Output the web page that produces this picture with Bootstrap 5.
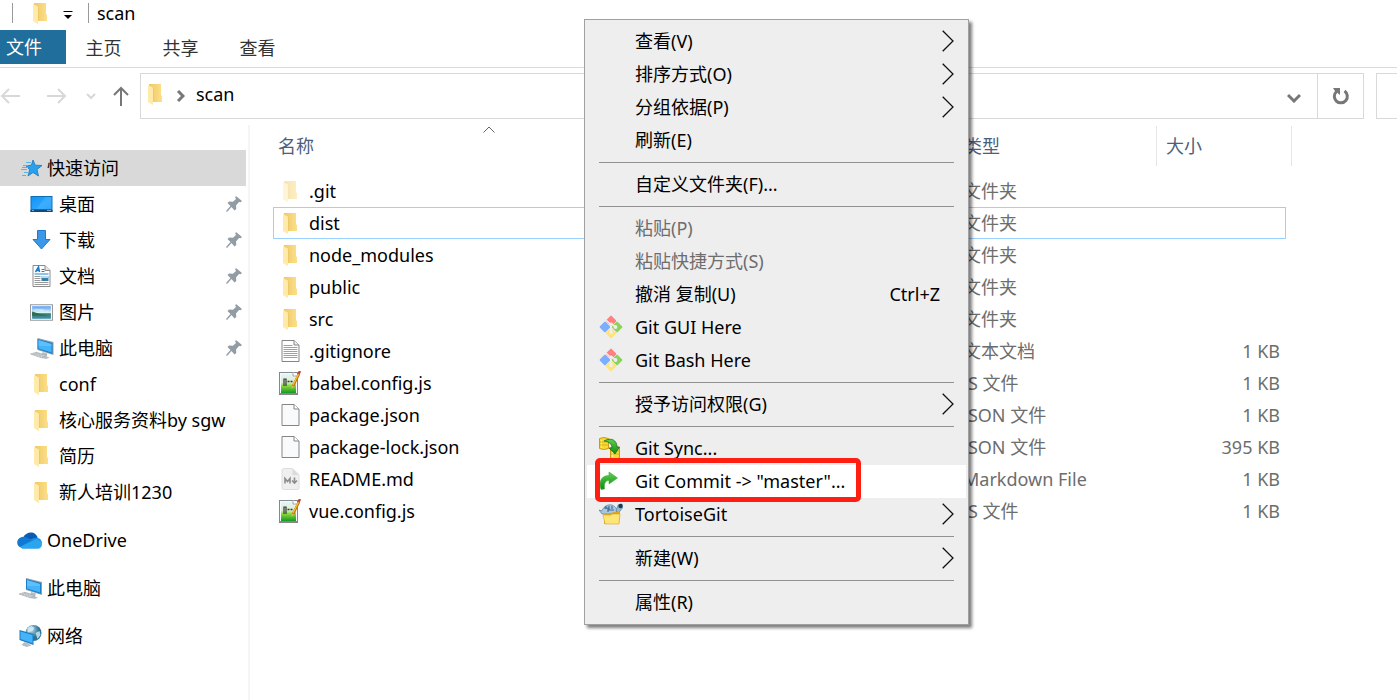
<!DOCTYPE html>
<html lang="zh-CN">
<head>
<meta charset="utf-8">
<meta name="viewport" content="width=device-width, initial-scale=1">
<title>scan</title>
<link rel="stylesheet" href="https://cdn.jsdelivr.net/npm/bootstrap@5.3.0/dist/css/bootstrap.min.css">
<style>
body{font-family:"Noto Sans","Noto Sans CJK SC",sans-serif;font-size:18px;line-height:24px;color:#000;background:#fff}
svg{display:block;flex:none}
button{color:inherit}
.plain{background:none;border:0;padding:0;color:inherit}
.explorer{min-height:100vh;overflow:hidden}
.titlebar{height:30px;padding:0 0 4px 12px}
.titlebar .plain{margin:4px 15px 0}
.titlebar .app{margin-left:20px}
.tick{width:1px;height:20px;background:#9a9a9a}
.ribbon{height:38px;border-bottom:1px solid #dadbdc;color:#333}
.ribbon .tab{height:36px;width:77px;line-height:36px;text-align:center}
.ribbon .tab-file{width:66px;height:34px;line-height:34px;background:#1f6e9c;color:#fff;text-align:left;padding-left:6px;margin-right:-1px}
.navrow{height:57px;padding:5px 0 6px}
.navrow .fwd{margin:0 19px 0 27px}
.navrow .up{margin:0 11px 0 17px}
.address{border:1px solid #d9d9d9;height:46px;padding-left:7px}
.address .crumb{margin:0 11px 0 14px}
.refresh{width:46px;height:44px;border-left:1px solid #d9d9d9}
.search{width:21px;height:46px;border:1px solid #d9d9d9;border-right:0;border-radius:0;padding:0;margin-left:12px}
.side{width:250px;flex:none;padding-top:25px;padding-right:2px;border-right:2px solid #f5f5f5}
.side a{color:#000;text-decoration:none;height:36px;width:246px;padding:0 4px 0 17px;display:flex;align-items:center}
.side a.sub{padding-left:30px}
.side a.current{background:#d9d9d9}
.side .root{margin-top:12px}
.side .ico{width:30px;flex:none}
.side .sub .ico{width:29px}
.main-pane{padding-left:23px}
.files{width:1019px;table-layout:fixed;border-collapse:separate;border-spacing:0}
.files th{height:50px;padding:0 0 8px;font-weight:400;color:#4c607a;vertical-align:middle;position:relative}
.files th div{height:40px;line-height:40px;padding-left:9px}
.files th .edge{border-left:1px solid #e5e5e5}
.files th .last{margin-left:5px;padding:0}
.files th:first-child div{padding-left:5px}
.sort{position:absolute;left:50%;top:1px;margin-left:-6px}
.files td{height:32px;line-height:24px;padding:0 0 0 11px;color:#6d6d6d;white-space:nowrap}
.files td:first-child{padding-left:6px;color:#000}
.files td.size{text-align:right;padding:0 6px 0 0}
.files .ico{width:30px}
.files .focus td{border:solid #99d1ff;border-width:1px 0}
.files .focus td:first-child{border-left-width:1px;padding-left:5px}
.files .focus td.size{border-right-width:1px}
.files .focus td.none{border:0}
.ctx{position:absolute;left:584px;top:19px;width:385px;background:#eee;border:1px solid #a0a0a0;padding:5px 2px;box-shadow:3px 3px 3px rgba(0,0,0,.5)}
.ctx button{display:flex;align-items:center;position:relative;width:100%;height:33px;padding:0 12px 2px;text-align:left}
.ctx button .ico{width:36px;flex:none}
.ctx button:disabled{color:#6d6d6d}
.ctx .hot{background:#fff}
.ctx hr{margin:5px 12px;border-top:1px solid #919191;opacity:1}
.ctx kbd{background:none;color:inherit;font:inherit;padding:0;margin-right:14px}
.mark-frame{position:absolute;left:8px;top:-7px;width:266px;height:44px;border:5px solid #ff1f12;border-radius:5px;z-index:1}
</style>
</head>
<body>
<svg width="0" height="0" class="position-absolute" aria-hidden="true">
<defs>
<linearGradient id="gf" x1="0" x2="1"><stop offset="0" stop-color="#efc964"/><stop offset="1" stop-color="#fcdf8b"/></linearGradient>
<linearGradient id="gs" x1="0" y1="0" x2="1" y2="1"><stop offset="0" stop-color="#1593f2"/><stop offset=".6" stop-color="#2aa4ff"/><stop offset="1" stop-color="#1698f7"/></linearGradient>
<linearGradient id="gn" x1="0" y1="0" x2="0" y2="1"><stop offset="0" stop-color="#e9f4f8"/><stop offset=".45" stop-color="#d5efc4"/><stop offset=".6" stop-color="#8fdc3e"/><stop offset="1" stop-color="#129a22"/></linearGradient>
<linearGradient id="gp" x1="0" y1="0" x2="0" y2="1"><stop offset="0" stop-color="#5a9ff0"/><stop offset=".5" stop-color="#d9f0fb"/><stop offset=".6" stop-color="#3c7f6a"/><stop offset="1" stop-color="#3d8fae"/></linearGradient>
<linearGradient id="gc" x1="0" y1="0" x2="0" y2="1"><stop offset="0" stop-color="#5ed04e"/><stop offset="1" stop-color="#0d8a14"/></linearGradient>
<radialGradient id="gg" cx=".35" cy=".3"><stop offset="0" stop-color="#b9dceb"/><stop offset="1" stop-color="#2b7397"/></radialGradient>
</defs>
<symbol id="folder" viewBox="0 0 15 21"><path fill="url(#gf)" d="M1 0h12v11l1 1v6H1z"/><path fill="#ffeaa9" d="M0 1l4 2 1 1v17l-2-1-3-2z"/><path fill="#e9c468" d="M5 4v14h.6V5z"/></symbol>
<symbol id="star" viewBox="0 0 22 20"><path fill="#2ba1ee" stroke="#1577bd" stroke-width=".8" d="M12 2l2.200 5.200 6.800.3-5 4 1.500 6.500-5.500-3.500-5 3.500 1.700-6.200L5 7.800l5.400-.6z"/><path stroke="#5ab4ec" stroke-width="1" d="M5 4.500h5M2 7.500h5M1 9.500h6M0 11.500h6M3 14.500h4M1 17.500h4"/></symbol>
<symbol id="desktop" viewBox="0 0 22 17"><path fill="#0b6fb8" d="M0 0h22v16H0z"/><path fill="url(#gs)" d="M1 1h20v12H1z"/><path fill="#5ec0ff" opacity=".35" d="M15 1h6v12H6z"/><path fill="#0a4b80" d="M0 14h22v2H0z"/><path stroke="#fff" d="M2 14.500h1M17 14.500h1M19 14.500h1"/></symbol>
<symbol id="down" viewBox="0 0 18 20"><path fill="#3b97e8" stroke="#2578c8" d="M5 .5h8v9h4.500L9 19 .5 9.500H5z"/></symbol>
<symbol id="doc" viewBox="0 0 18 22"><path fill="#fff" stroke="#8b8b8b" d="M.5.5h12l5 5v16H.5z"/><path fill="#e5e5e5" stroke="#8b8b8b" d="M12.500.5v5h5"/><path stroke="#1979ca" stroke-width="1.500" fill="none" d="M3 7l3-5 1 5M4 5.500h3"/><path stroke="#1b87d8" d="M9 4.500h3M9 6.500h3M2 9h14"/><path stroke="#999" d="M2 11.500h6M2 13.500h6M2 15.500h6M2 17.500h14M2 19.500h14"/><path fill="#3c7da8" d="M9 11h7v5H9z"/><path fill="#b9dcf5" d="M9 11h7v2H9z"/></symbol>
<symbol id="pic" viewBox="0 0 22 16"><path fill="#fff" stroke="#999" d="M.5.5h21v15H.5z"/><path fill="url(#gp)" d="M2 2h18v12H2z"/><path fill="#2e6e50" d="M2 7l6 2 10 2H2z"/><path fill="#d8f0f8" d="M4 5h9v1H4zM9 6h9v1H9z" opacity=".8"/></symbol>
<symbol id="pc" viewBox="0 0 23 21"><path fill="#8fa1ab" d="M7 0l16 4v13L7 12z"/><path fill="#1b7fc5" d="M7 1l15 4v11L7 11z"/><path fill="#43b3fb" d="M8 2l13 4v8.500L8 10.500z"/><path fill="#79ccff" opacity=".5" d="M8 2l13 4v2L8 8z"/><path fill="#b4bec4" d="M12 14l5 1.500-1 3 3 .7-3 1.800-5-1z"/><path fill="#d3d8db" stroke="#9aa5ab" stroke-width=".6" d="M0 16l6-1.700 10 3-5 2.500z"/><path stroke="#8c979d" stroke-width=".6" stroke-dasharray="2 1" d="M3 16l9 2.500M5 15l9 2.500"/></symbol>
<symbol id="cloud" viewBox="0 0 24 16"><path fill="#0a5bb4" d="M6 5C9-1 18-2 20 6l-7 5z"/><path fill="#1279d2" d="M5 15C-2 14-1 5 6 4.500c2-.4 4 .8 6 2L17 9 7 15z"/><path fill="#1b8ee2" d="M12 7l5-1.500C22 5 24 8 24 11z"/><path fill="#2aa5ee" d="M3 14l10-5 6-2.500c3 1 5 3 5 5.500 0 2-2 4-4 4H6c-1 0-2-1-3-2z"/></symbol>
<symbol id="net" viewBox="0 0 22 22"><circle cx="14" cy="8" r="8" fill="url(#gg)"/><path fill="#d9edf5" opacity=".8" d="M8 3l4-2 3 2-2 3-3 1-2 3zM16 8l4-2 1 4-3 4z"/><path fill="#1c7cc2" d="M0 5l14 4v11L0 15z"/><path fill="#45b3fa" d="M1 6.500l12 3.400v8.300L1 14z"/><path fill="#b4bec4" d="M5 17l4 1.500 3 2-5 1.500-5-2z"/></symbol>
<symbol id="pin" viewBox="0 0 16 16"><path fill="#929ca5" d="M10 0l6 5-1.500 1.200-1.500-.2-3 3.500.3 3.500-1.800 1.500-3-3.500L1 16 0 15l4.500-5L1.500 7 3 5.500l4 .2 3-2.700-.8-1.500z"/></symbol>
<symbol id="txt" viewBox="0 0 18 22"><path fill="#fff" stroke="#858585" d="M.5.5h12l5 4.500v16.500H.5z"/><path fill="#eee" stroke="#858585" d="M12.500.5V5h5"/><path stroke="#a0a0a0" d="M2 5.500h9M2 7.500h14M2 9.500h14M2 11.500h14M2 13.500h14M2 15.500h14M2 17.500h14"/></symbol>
<symbol id="blank" viewBox="0 0 18 22"><path fill="#f8fafb" stroke="#858585" d="M.5.5h12l5 4.500v16.500H.5z"/><path fill="#fff" stroke="#858585" d="M12.500.5V5h5"/></symbol>
<symbol id="md" viewBox="0 0 18 22"><path fill="#efefef" stroke="#dedede" d="M.5 2Q.5.5 2 .5h9l6.500 6V20q0 1.500-1.500 1.500H2Q.5 21.500.5 20z"/><path fill="#dadada" d="M11 1l6 6h-6z"/><path fill="none" stroke="#8d8d8d" stroke-width="1.600" d="M3.500 15.500v-5l2.500 3 2.500-3v5M13 9.500V14M10.500 12.500l2.500 2.500 2.500-2.500"/></symbol>
<symbol id="npp" viewBox="0 0 22 24"><path fill="#888" d="M0 1h19v23H0z"/><path fill="#f7fafc" d="M1 2h17v20H1z"/><path fill="url(#gn)" d="M2 3h15v19H2z"/><path fill="#fff" stroke="#888" stroke-width=".7" d="M14 1v4h4"/><path stroke="#8a9196" stroke-dasharray="1 1" d="M1 1.500h14"/><path fill="none" stroke="#333" stroke-width="1.200" d="M5 15V8h2v7"/><path stroke="#333" stroke-width="1.600" d="M8.500 10.500h2M11.500 10.500h2"/><path stroke="#bd7211" stroke-width="2.500" d="M20 3l-6 12"/><path stroke="#ffbe32" stroke-width="1.200" d="M19.500 3L14 14"/><path stroke="#b8464e" stroke-width="2.500" d="M21 0l-1.500 3"/><path fill="#e8b35a" d="M12.800 14.500l-.3 3.500 2.500-2.500z"/></symbol>
<symbol id="git" viewBox="0 0 24 24"><g transform="rotate(45 12 12)"><rect x="3.700" y="3.700" width="8" height="8" rx="1" fill="#ff8080"/><rect x="12.300" y="3.700" width="8" height="8" rx="1" fill="#8bd35c"/><rect x="3.700" y="12.300" width="8" height="8" rx="1" fill="#7aaeff"/><rect x="12.300" y="12.300" width="8" height="8" rx="1" fill="#ffe37d"/></g><path fill="none" stroke="#eee" stroke-width="1.600" d="M7 5l5 5v7M12 8l4 4"/><circle cx="12" cy="17" r="1.900" fill="#eee"/><circle cx="16.500" cy="12" r="1.900" fill="#eee"/><circle cx="12" cy="9" r="1.600" fill="#eee"/></symbol>
<symbol id="sync" viewBox="0 0 22 22"><path fill="#f7d934" stroke="#c89b12" d="M.5 1.500q4-2 9 0v10q-5 2-9 0zM11.500 10.500q5-2 9 0V21q-5 2-9 0z"/><path stroke="#fff28c" d="M2.500 3v8M13.500 12v8"/><path stroke="#d9b21e" d="M1 5h8M1 8h8M12 14h8M12 17h8"/><path fill="url(#gc)" stroke="#23701e" stroke-width=".8" d="M5 4c7-4 13-1 13 6h2.500L16 17l-6-6h3C13 7 10 4.500 5 4z"/></symbol>
<symbol id="commit" viewBox="0 0 20 20"><path fill="url(#gc)" stroke="#46a83f" stroke-width=".6" d="M10 1l8.500 6L10 13v-3.500C6 9.500 5 13 5.500 18L2 18.500C-1 10 3 4.500 10 4.500z"/></symbol>
<symbol id="tortoise" viewBox="0 0 24 22"><path fill="#a9c7de" stroke="#54789a" stroke-width=".7" d="M0 7l3 1c2-7 12-9 15-1l-1 4H3z"/><path stroke="#406c9a" stroke-width="1.200" fill="none" d="M5 5h4v4M10 3v4h5M13 3v3M7 3v3"/><path fill="#93b8d3" stroke="#54789a" stroke-width=".6" d="M17 8l2-6 4-1 .5 4-4 5z"/><circle cx="21.500" cy="3" r="2.200" fill="#183b58"/><path fill="#d9a821" d="M5 11l2-1h6l1-1h7v4l-1 8H5z"/><path fill="#ffe476" stroke="#d2a426" stroke-width=".6" d="M4 12h8l1-1h8l-1 10H6z"/></symbol>
<symbol id="more" viewBox="0 0 12 22"><path fill="none" stroke="#111" stroke-width="1.300" d="M.7.7L11 11 .7 21.300"/></symbol>
</svg>

<div class="explorer d-flex flex-column">
  <header class="titlebar d-flex align-items-center">
    <span class="tick"></span>
    <svg class="app" width="15" height="21"><use href="#folder"/></svg>
    <button class="plain" aria-label="自定义快速访问工具栏"><svg width="10" height="8" viewBox="0 0 10 8"><path d="M.5 0h9v1h-9zM1 4h8L5 8z"/></svg></button>
    <span class="tick me-2"></span>
    <span>scan</span>
  </header>
  <nav class="ribbon d-flex">
    <button class="plain tab tab-file">文件</button>
    <button class="plain tab">主页</button>
    <button class="plain tab">共享</button>
    <button class="plain tab">查看</button>
  </nav>
  <div class="navrow d-flex align-items-center">
    <button class="plain" aria-label="后退"><svg width="20" height="16" viewBox="0 0 20 16" fill="none" stroke="#d8d8d8" stroke-width="2"><path d="M20 8H2M9 1L2 8l7 7"/></svg></button>
    <button class="plain fwd" aria-label="前进"><svg width="20" height="16" viewBox="0 0 20 16" fill="none" stroke="#d8d8d8" stroke-width="2"><path d="M0 8h18M11 1l7 7-7 7"/></svg></button>
    <button class="plain" aria-label="最近位置"><svg width="10" height="7" viewBox="0 0 10 7" fill="none" stroke="#d8d8d8" stroke-width="2"><path d="M1 1l4 4 4-4"/></svg></button>
    <button class="plain up" aria-label="向上"><svg width="16" height="20" viewBox="0 0 16 20" fill="none" stroke="#777" stroke-width="2"><path d="M8 20V2M1 9l7-7 7 7"/></svg></button>
    <div class="address d-flex align-items-center flex-grow-1">
      <svg width="15" height="21" class="mb-1"><use href="#folder"/></svg>
      <svg class="crumb" width="8" height="12" viewBox="0 0 8 12" fill="none" stroke="#777" stroke-width="3"><path d="M1 1l5 5-5 5"/></svg>
      <button class="plain me-auto pb-1">scan</button>
      <button class="plain me-3 pt-1" aria-label="展开"><svg width="14" height="10" viewBox="0 0 14 10" fill="none" stroke="#777" stroke-width="3"><path d="M1 2l6 6 6-6"/></svg></button>
      <button class="plain refresh d-flex align-items-center justify-content-center" aria-label="刷新"><svg width="18" height="18" viewBox="0 0 18 18"><path fill="none" stroke="#777" stroke-width="3" d="M12.500 4a6.500 6.500 0 1 1-8 .5"/><path fill="#777" d="M1 1h7v7L5.500 6 3 4z"/></svg></button>
    </div>
    <input class="search" type="text" aria-label="搜索">
  </div>
  <div class="d-flex flex-grow-1">
    <nav class="side">
      <a href="#" class="current"><span class="ico"><svg class="ms-1" width="22" height="20"><use href="#star"/></svg></span>快速访问</a>
      <a href="#" class="sub"><span class="ico"><svg width="23" height="17"><use href="#desktop"/></svg></span><span class="me-auto">桌面</span><svg width="16" height="16"><use href="#pin"/></svg></a>
      <a href="#" class="sub"><span class="ico"><svg width="23" height="20"><use href="#down"/></svg></span><span class="me-auto">下载</span><svg width="16" height="16"><use href="#pin"/></svg></a>
      <a href="#" class="sub"><span class="ico"><svg width="23" height="22"><use href="#doc"/></svg></span><span class="me-auto">文档</span><svg width="16" height="16"><use href="#pin"/></svg></a>
      <a href="#" class="sub"><span class="ico"><svg width="23" height="17"><use href="#pic"/></svg></span><span class="me-auto">图片</span><svg width="16" height="16"><use href="#pin"/></svg></a>
      <a href="#" class="sub"><span class="ico"><svg width="24" height="21"><use href="#pc"/></svg></span><span class="me-auto">此电脑</span><svg width="16" height="16"><use href="#pin"/></svg></a>
      <a href="#" class="sub"><span class="ico"><svg width="23" height="21"><use href="#folder"/></svg></span>conf</a>
      <a href="#" class="sub"><span class="ico"><svg width="23" height="21"><use href="#folder"/></svg></span>核心服务资料by sgw</a>
      <a href="#" class="sub"><span class="ico"><svg width="23" height="21"><use href="#folder"/></svg></span>简历</a>
      <a href="#" class="sub"><span class="ico"><svg width="23" height="21"><use href="#folder"/></svg></span>新人培训1230</a>
      <a href="#" class="root"><span class="ico"><svg width="25" height="17"><use href="#cloud"/></svg></span>OneDrive</a>
      <a href="#" class="root"><span class="ico"><svg width="27" height="21"><use href="#pc"/></svg></span>此电脑</a>
      <a href="#" class="root"><span class="ico"><svg width="27" height="22"><use href="#net"/></svg></span>网络</a>
    </nav>
    <main class="main-pane flex-grow-1 overflow-hidden">
      <table class="files">
        <colgroup><col style="width:432px"><col style="width:247px"><col style="width:204px"><col style="width:130px"><col style="width:6px"></colgroup>
        <thead><tr>
          <th><svg class="sort" width="12" height="7" viewBox="0 0 12 7" fill="none" stroke="#666"><path d="M.5 6.500L6 1l5.500 5.500"/></svg><div>名称</div></th>
          <th></th><th><div class="ps-2 ms-1">类型</div></th><th><div class="edge">大小</div></th><th><div class="edge last"></div></th>
        </tr></thead>
        <tbody>
          <tr><td><div class="d-flex align-items-center"><span class="ico"><svg width="23" height="21" opacity=".5"><use href="#folder"/></svg></span>.git</div></td><td></td><td>文件夹</td><td class="size"></td><td class="none"></td></tr>
          <tr class="focus"><td><div class="d-flex align-items-center"><span class="ico"><svg width="23" height="21"><use href="#folder"/></svg></span>dist</div></td><td></td><td>文件夹</td><td class="size"></td><td class="none"></td></tr>
          <tr><td><div class="d-flex align-items-center"><span class="ico"><svg width="23" height="21"><use href="#folder"/></svg></span>node_modules</div></td><td></td><td>文件夹</td><td class="size"></td><td class="none"></td></tr>
          <tr><td><div class="d-flex align-items-center"><span class="ico"><svg width="23" height="21"><use href="#folder"/></svg></span>public</div></td><td></td><td>文件夹</td><td class="size"></td><td class="none"></td></tr>
          <tr><td><div class="d-flex align-items-center"><span class="ico"><svg width="23" height="21"><use href="#folder"/></svg></span>src</div></td><td></td><td>文件夹</td><td class="size"></td><td class="none"></td></tr>
          <tr><td><div class="d-flex align-items-center"><span class="ico"><svg width="23" height="22"><use href="#txt"/></svg></span>.gitignore</div></td><td></td><td>文本文档</td><td class="size">1 KB</td><td class="none"></td></tr>
          <tr><td><div class="d-flex align-items-center"><span class="ico"><svg width="22" height="24"><use href="#npp"/></svg></span>babel.config.js</div></td><td></td><td>JS 文件</td><td class="size">1 KB</td><td class="none"></td></tr>
          <tr><td><div class="d-flex align-items-center"><span class="ico"><svg width="23" height="22"><use href="#blank"/></svg></span>package.json</div></td><td></td><td>JSON 文件</td><td class="size">1 KB</td><td class="none"></td></tr>
          <tr><td><div class="d-flex align-items-center"><span class="ico"><svg width="23" height="22"><use href="#blank"/></svg></span>package-lock.json</div></td><td></td><td>JSON 文件</td><td class="size">395 KB</td><td class="none"></td></tr>
          <tr><td><div class="d-flex align-items-center"><span class="ico"><svg width="23" height="22"><use href="#md"/></svg></span>README.md</div></td><td></td><td>Markdown File</td><td class="size">1 KB</td><td class="none"></td></tr>
          <tr><td><div class="d-flex align-items-center"><span class="ico"><svg width="22" height="24"><use href="#npp"/></svg></span>vue.config.js</div></td><td></td><td>JS 文件</td><td class="size">1 KB</td><td class="none"></td></tr>
        </tbody>
      </table>
    </main>
  </div>
</div>

<div class="ctx" role="menu">
  <button class="plain"><span class="ico"></span><span class="me-auto">查看(V)</span><svg width="12" height="22"><use href="#more"/></svg></button>
  <button class="plain"><span class="ico"></span><span class="me-auto">排序方式(O)</span><svg width="12" height="22"><use href="#more"/></svg></button>
  <button class="plain"><span class="ico"></span><span class="me-auto">分组依据(P)</span><svg width="12" height="22"><use href="#more"/></svg></button>
  <button class="plain"><span class="ico"></span>刷新(E)</button>
  <hr>
  <button class="plain"><span class="ico"></span>自定义文件夹(F)...</button>
  <hr>
  <button class="plain" disabled><span class="ico"></span>粘贴(P)</button>
  <button class="plain" disabled><span class="ico"></span>粘贴快捷方式(S)</button>
  <button class="plain"><span class="ico"></span><span class="me-auto">撤消 复制(U)</span><kbd>Ctrl+Z</kbd></button>
  <button class="plain"><span class="ico"><svg width="24" height="24"><use href="#git"/></svg></span>Git GUI Here</button>
  <button class="plain"><span class="ico"><svg width="24" height="24"><use href="#git"/></svg></span>Git Bash Here</button>
  <hr>
  <button class="plain"><span class="ico"></span><span class="me-auto">授予访问权限(G)</span><svg width="12" height="22"><use href="#more"/></svg></button>
  <hr>
  <button class="plain"><span class="ico"><svg width="22" height="22"><use href="#sync"/></svg></span>Git Sync...</button>
  <button class="plain hot"><span class="mark-frame"></span><span class="ico"><svg width="20" height="20"><use href="#commit"/></svg></span>Git Commit -&gt; "master"...</button>
  <button class="plain"><span class="ico"><svg width="24" height="22"><use href="#tortoise"/></svg></span><span class="me-auto">TortoiseGit</span><svg width="12" height="22"><use href="#more"/></svg></button>
  <hr>
  <button class="plain"><span class="ico"></span><span class="me-auto">新建(W)</span><svg width="12" height="22"><use href="#more"/></svg></button>
  <hr>
  <button class="plain"><span class="ico"></span>属性(R)</button>
</div>
<script src="https://cdn.jsdelivr.net/npm/bootstrap@5.3.0/dist/js/bootstrap.bundle.min.js"></script>
</body>
</html>
